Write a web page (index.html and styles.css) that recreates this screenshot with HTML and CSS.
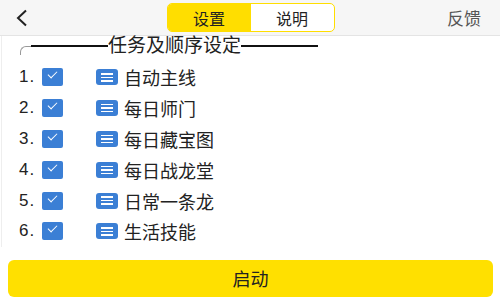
FILE: index.html
```html
<!DOCTYPE html>
<html lang="zh-CN">
<head>
    <meta charset="UTF-8">
    <meta name="viewport" content="width=device-width, initial-scale=1.0">
    <title>设置</title>
    <link rel="stylesheet" href="styles.css">
</head>
<body>
    <!-- Top bar -->
    <header class="topbar">
        <div class="back">
            <svg width="14" height="18" viewBox="0 0 14 18">
                <polyline points="11,1.5 3,9 11,16.5" fill="none" stroke="#222" stroke-width="2"/>
            </svg>
        </div>
        <div class="tabs">
            <span class="tab active">设置</span>
            <span class="tab">说明</span>
        </div>
        <div class="feedback">反馈</div>
    </header>

    <!-- Task list -->
    <section class="tasks">
        <div class="legend">
            <span class="corner"></span>
            <span class="rule"></span>
            <span class="legend-text">任务及顺序设定</span>
            <span class="rule"></span>
        </div>

        <ul class="task-list">
            <li class="task"><span class="num">1.</span><span class="check"></span><span class="drag"><i></i><i></i><i></i></span><span class="name">自动主线</span></li>
            <li class="task"><span class="num">2.</span><span class="check"></span><span class="drag"><i></i><i></i><i></i></span><span class="name">每日师门</span></li>
            <li class="task"><span class="num">3.</span><span class="check"></span><span class="drag"><i></i><i></i><i></i></span><span class="name">每日藏宝图</span></li>
            <li class="task"><span class="num">4.</span><span class="check"></span><span class="drag"><i></i><i></i><i></i></span><span class="name">每日战龙堂</span></li>
            <li class="task"><span class="num">5.</span><span class="check"></span><span class="drag"><i></i><i></i><i></i></span><span class="name">日常一条龙</span></li>
            <li class="task"><span class="num">6.</span><span class="check"></span><span class="drag"><i></i><i></i><i></i></span><span class="name">生活技能</span></li>
        </ul>
    </section>

    <button class="start" type="button">启动</button>
</body>
</html>
```

FILE: styles.css
```css
body {
    margin: 0;
    background: #ffffff;
    font-family: "Liberation Sans", "Noto Sans CJK SC", sans-serif;
    color: #222222;
}

.topbar {
    display: grid;
    grid-template-columns: 1fr auto 1fr;
    align-items: center;
    height: 35px;
    background: #f6f6f6;
    border-bottom: 1px solid #e4e4e4;
}

.back {
    padding-left: 15px;
    display: flex;
    align-items: center;
}

.tabs {
    display: flex;
    height: 27px;
    margin-left: 1px;
    border: 1px solid #ffde00;
    border-radius: 5px;
    overflow: hidden;
    background: #ffffff;
}

.tab {
    width: 83px;
    display: flex;
    align-items: center;
    justify-content: center;
    font-size: 16px;
    color: #222222;
}

.tab.active {
    background: #ffde00;
}

.feedback {
    justify-self: end;
    padding-right: 19px;
    font-size: 17px;
    color: #555555;
}

.tasks {
    border-left: 1px solid #eeeeee;
    margin-left: 1px;
}

.legend {
    display: flex;
    align-items: center;
    height: 20px;
    padding-left: 18px;
}

.corner {
    width: 10px;
    height: 8px;
    margin-top: 8px;
    border-top: 1px solid #999999;
    border-left: 1px solid #999999;
    border-top-left-radius: 6px;
}

.rule {
    width: 77px;
    height: 2px;
    background: #111111;
}

.legend-text {
    font-size: 19px;
    line-height: 20px;
}

.task-list {
    list-style: none;
    margin: 6px 0 0;
    padding: 0;
}

.task {
    display: flex;
    align-items: center;
    height: 30.8px;
    padding-left: 17px;
}

.num {
    width: 23px;
    font-size: 17px;
    letter-spacing: 1px;
}

.check {
    position: relative;
    width: 21px;
    height: 18px;
    border-radius: 2px;
    background: #3b7fd5;
}

.check::after {
    content: "";
    position: absolute;
    left: 6px;
    top: 3px;
    width: 8px;
    height: 4px;
    border-left: 1.5px solid #ffffff;
    border-bottom: 1.5px solid #ffffff;
    transform: rotate(-45deg);
}

.drag {
    display: flex;
    flex-direction: column;
    justify-content: center;
    gap: 2px;
    width: 22px;
    height: 16px;
    margin-left: 33px;
    border-radius: 3px;
    background: #3b7fd5;
}

.drag i {
    display: block;
    height: 1.5px;
    margin: 0 5px;
    background: #ffffff;
}

.name {
    margin-left: 6px;
    font-size: 18px;
}

.start {
    display: block;
    width: 485px;
    height: 37px;
    margin: 13px 0 0 8px;
    border: 0;
    border-radius: 6px;
    background: #ffe000;
    font-family: "Liberation Sans", "Noto Sans CJK SC", sans-serif;
    font-size: 18px;
    color: #222222;
}
```
